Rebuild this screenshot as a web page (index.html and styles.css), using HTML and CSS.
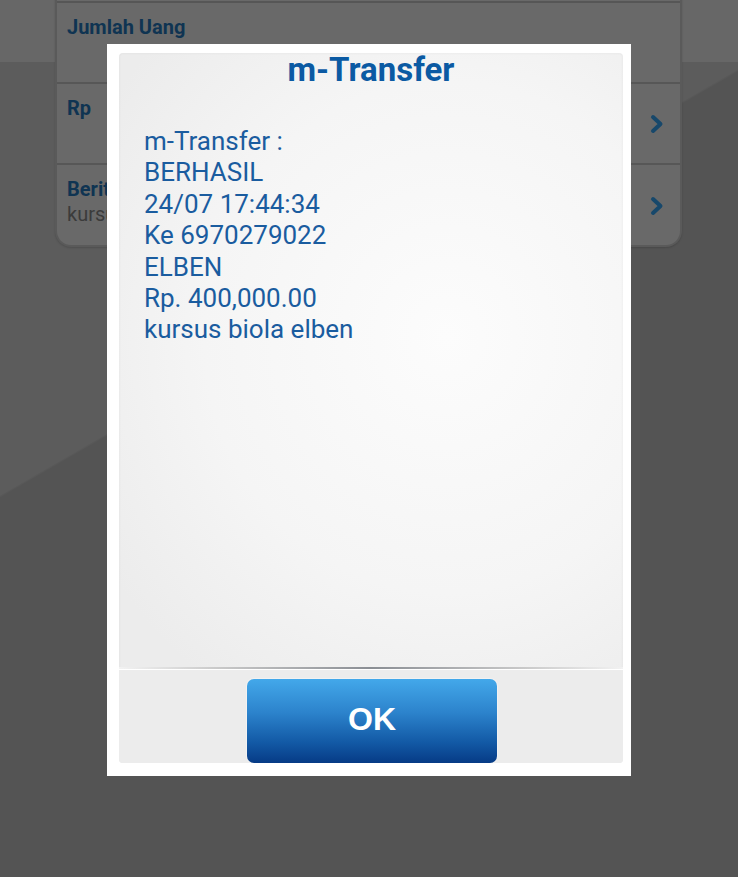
FILE: index.html
```html
<!DOCTYPE html>
<html lang="id">
<head>
<meta charset="utf-8">
<title>m-Transfer</title>
<link rel="stylesheet" href="styles.css">
</head>
<body>
<div class="screen">
  <div class="bg-top"></div>
  <div class="card">
    <div class="row">
      <div class="row-text"><div class="label">Jumlah Uang</div></div>
    </div>
    <div class="row">
      <div class="row-text"><div class="label">Rp</div></div>
      <svg class="chev" width="14" height="20" viewBox="0 0 14 20"><path d="M3 3 L10.5 10 L3 17" fill="none" stroke="#17486b" stroke-width="4" stroke-linecap="round" stroke-linejoin="round"/></svg>
    </div>
    <div class="row row-last">
      <div class="row-text"><div class="label">Berita</div><div class="sub">kursus biola elben</div></div>
      <svg class="chev" width="14" height="20" viewBox="0 0 14 20"><path d="M3 3 L10.5 10 L3 17" fill="none" stroke="#17486b" stroke-width="4" stroke-linecap="round" stroke-linejoin="round"/></svg>
    </div>
  </div>

  <div class="modal">
    <div class="panel">
      <div class="content">
        <div class="title">m-Transfer</div>
        <div class="message">
          <div>m-Transfer :</div>
          <div>BERHASIL</div>
          <div>24/07 17:44:34</div>
          <div>Ke 6970279022</div>
          <div>ELBEN</div>
          <div>Rp. 400,000.00</div>
          <div>kursus biola elben</div>
        </div>
      </div>
      <div class="footer">
        <button class="ok">OK</button>
      </div>
    </div>
  </div>
</div>
</body>
</html>
```
FILE: styles.css
```css
* { box-sizing: border-box; }
html, body { margin: 0; padding: 0; }
body {
  width: 738px;
  height: 877px;
  overflow: hidden;
  background: #545454;
  font-family: Roboto, "Noto Sans", sans-serif;
}
.screen {
  position: relative;
  width: 738px;
  height: 877px;
  background: linear-gradient(150deg, #5c5c5c 0%, #5c5c5c 38%, #545454 38.2%, #545454 100%);
}
.bg-top {
  position: absolute;
  left: 0; top: 0;
  width: 738px; height: 62px;
  background: #676767;
}
.card {
  position: absolute;
  left: 55px; top: -10px;
  width: 627px;
  background: #696969;
  border: 2px solid #5a5a5a;
  border-top: none;
  border-radius: 0 0 16px 16px;
  display: flex;
  flex-direction: column;
  padding-top: 13px;
  box-shadow: 0 1px 2px rgba(0,0,0,0.15);
}
.card::before {
  content: "";
  display: block;
  height: 2px;
  background: #565656;
  margin-top: -2px;
}
.row {
  height: 81px;
  display: flex;
  align-items: flex-start;
  justify-content: space-between;
  padding: 0 16px 0 10px;
  border-bottom: 2px solid #575757;
}
.row-last { border-bottom: none; height: 80px; }
.row-text { padding-top: 12px; }
.label {
  font-weight: 700;
  font-size: 20px;
  line-height: 24px;
  color: #0f3452;
}
.sub {
  font-size: 20px;
  line-height: 26px;
  color: #3b3b3b;
}
.chev { margin-top: 30px; }
.row:nth-child(3) .chev { margin-top: 31px; }

.modal {
  position: absolute;
  left: 107px; top: 44px;
  width: 524px; height: 732px;
  background: #ffffff;
  padding: 9px 8px 13px 12px;
}
.panel {
  height: 100%;
  display: flex;
  flex-direction: column;
  border-radius: 4px;
  background: radial-gradient(ellipse 80% 60% at 65% 40%, #fcfcfc 0%, #f5f5f5 60%, #ececec 100%);
  box-shadow: inset 0 0 3px rgba(0,0,0,0.06);
}
.content {
  flex: 1;
  padding: 0 0 0 25px;
}
.title {
  text-align: center;
  font-weight: 700;
  font-size: 33px;
  line-height: 34px;
  margin: 0 0 0 -25px;
  color: #0b5aa3;
}
.message {
  margin-top: 39px;
  font-size: 26px;
  line-height: 31.4px;
  color: #1a5c9f;
}
.footer {
  height: 95px;
  border-top: 1px solid transparent;
  position: relative;
  background: #ececec;
  border-radius: 0 0 4px 4px;
  display: flex;
  justify-content: center;
  padding-top: 10px;
  padding-left: 2px;
}
.footer::before {
  content: "";
  position: absolute;
  left: 0; right: 0; top: -2px;
  height: 2px;
  background: linear-gradient(90deg, #f2f2f2 0%, #c8c8c8 20%, #8a8e94 50%, #c8c8c8 80%, #f2f2f2 100%);
}
.footer::after {
  content: "";
  position: absolute;
  left: 0; right: 0; top: 0;
  height: 1px;
  background: #ffffff;
}
.ok {
  width: 250px;
  height: 84px;
  border: none;
  border-radius: 7px;
  background: linear-gradient(180deg, #43a8ea 0%, #2c83cc 40%, #135aa6 75%, #063b86 100%);
  color: #ffffff;
  font-family: "Liberation Sans", Arial, sans-serif;
  font-weight: 700;
  font-size: 32px;
  padding: 0 0 4px 0;
  box-shadow: 0 0 0 1px rgba(255,255,255,0.3);
}
```
